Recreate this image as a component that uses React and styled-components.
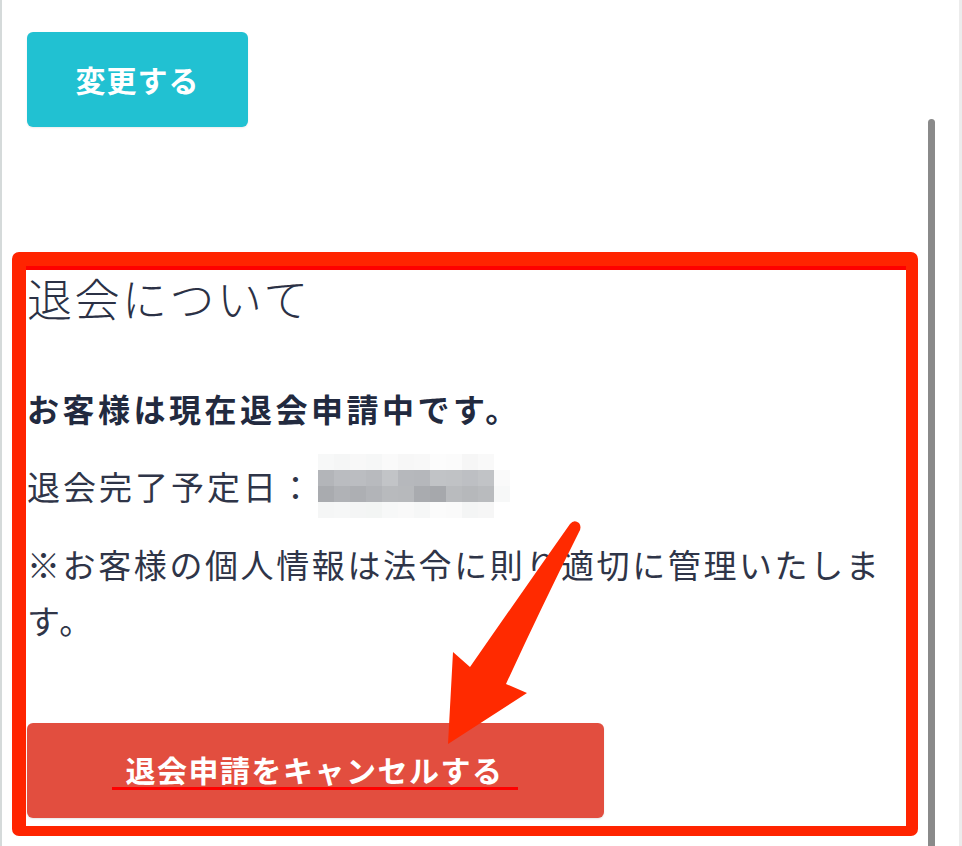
import React from "react";
import styled, { createGlobalStyle } from "styled-components";

const Global = createGlobalStyle`
  html, body { margin: 0; padding: 0; background: #ffffff; }
  body { font-family: "Noto Sans CJK JP", "Noto Sans", sans-serif; }
  * { box-sizing: border-box; }
`;

const Page = styled.div`
  position: relative;
  width: 962px;
  height: 846px;
  overflow: hidden;
  background: #ffffff;
  border-left: 2px solid #d5dada;
  border-right: 3px solid #ececec;
  padding: 32px 0 0 0;
`;

const ChangeButton = styled.button`
  display: flex;
  align-items: center;
  justify-content: center;
  margin-left: 25px;
  width: 221px;
  height: 95px;
  border: none;
  border-radius: 6px;
  background: #21c1d2;
  color: #ffffff;
  font-family: "Noto Sans CJK JP", sans-serif;
  font-weight: 700;
  font-size: 30px;
  letter-spacing: 1px;
  padding: 0 0 2px 0;
  box-shadow: 0 1px 2px rgba(0, 0, 0, 0.08);
`;

const Highlight = styled.section`
  margin: 125px 0 0 10px;
  width: 906px;
  height: 584px;
  border-style: solid;
  border-color: #ff2400;
  border-width: 14px 12px 10px 14px;
  border-radius: 7px;
  box-shadow: inset 0 4px 0 #ff0000;
  display: flex;
  flex-direction: column;
  padding-left: 1px;
  color: #2b3145;
`;

const Heading = styled.h2`
  margin: 0;
  font-family: "Noto Sans CJK JP", sans-serif;
  font-weight: 300;
  font-size: 45px;
  line-height: 64px;
  letter-spacing: 2.5px;
  color: #2b3145;
`;

const StatusText = styled.p`
  margin: 53px 0 0 0;
  font-weight: 700;
  font-size: 32px;
  line-height: 50px;
  letter-spacing: 3.5px;
  color: #222a3f;
`;

const InfoText = styled.p`
  margin: 28px 0 0 0;
  height: 50px;
  font-weight: 400;
  font-size: 33px;
  line-height: 50px;
  letter-spacing: 3px;
  color: #2f3548;
  display: flex;
  align-items: center;
`;

const Paragraph = styled.p`
  margin: 25px 0 0 0;
  font-weight: 400;
  font-size: 33px;
  line-height: 56px;
  letter-spacing: 2.6px;
  color: #2f3548;
`;

const Blur = styled.span`
  display: grid;
  grid-template-columns: repeat(12, 16px);
  grid-auto-rows: 16px;
  margin-left: 3px;
  flex: none;
`;

const Cell = styled.span`
  display: block;
  background: ${(p) => p.$c};
`;

const CancelButton = styled.button`
  margin-top: 75px;
  width: 577px;
  height: 95px;
  border: none;
  border-radius: 6px;
  background: #e24e3f;
  display: flex;
  align-items: center;
  justify-content: center;
  padding: 0 2px 0 0;
  box-shadow: 0 1px 2px rgba(0, 0, 0, 0.1);
`;

const CancelLabel = styled.span`
  display: inline-block;
  padding: 0 14px;
  font-family: "Noto Sans CJK JP", sans-serif;
  font-weight: 700;
  font-size: 30px;
  line-height: 36px;
  letter-spacing: 1.5px;
  color: #ffffff;
  border-bottom: 3px solid #ff0000;
`;

const Scrollbar = styled.div`
  position: absolute;
  left: 926px;
  top: 119px;
  width: 7px;
  height: 760px;
  border-radius: 4px 4px 0 0;
  background: #8a8a8a;
`;

const Overlay = styled.svg`
  position: absolute;
  left: -2px;
  top: 0;
  width: 962px;
  height: 846px;
  pointer-events: none;
`;

const rows = [
  ["#f7f8f8", "#f5f6f6", "#f8f8f8", "#f6f7f7", "#fafafa", "#f7f7f7", "#f8f8f8", "#fcfcfc", "#fbfbfb", "#f6f6f6", "#f9f9f9", "#ffffff"],
  ["#b3b5b9", "#babcc0", "#bbbdc1", "#b8babe", "#c2c4c7", "#b6b8bc", "#b5b7bb", "#c1c3c6", "#c0c2c5", "#bdbfc3", "#c1c3c6", "#fafafa"],
  ["#a9abaf", "#b0b2b6", "#adafb3", "#b2b4b8", "#b8babd", "#b7b9bc", "#a9abaf", "#a6a8ac", "#b9bbbe", "#b6b8bb", "#b9bbbe", "#f7f8f8"],
  ["#f5f6f6", "#f6f7f7", "#f4f5f5", "#f3f5f4", "#f7f8f8", "#f9f9f9", "#f6f7f7", "#fbfbfb", "#fafafa", "#f4f5f5", "#f6f6f6", "#ffffff"],
];

export default function App() {
  return (
    <>
      <Global />
      <Page>
        <ChangeButton>変更する</ChangeButton>
        <Highlight>
          <Heading>退会について</Heading>
          <StatusText>お客様は現在退会申請中です。</StatusText>
          <InfoText>
            退会完了予定日：
            <Blur aria-hidden="true">
              {rows.flatMap((r, i) => r.map((c, j) => <Cell key={`${i}-${j}`} $c={c} />))}
            </Blur>
          </InfoText>
          <Paragraph>※お客様の個人情報は法令に則り適切に管理いたします。</Paragraph>
          <CancelButton>
            <CancelLabel>退会申請をキャンセルする</CancelLabel>
          </CancelButton>
        </Highlight>
        <Scrollbar />
        <Overlay viewBox="0 0 962 846">
          <path
            d="M 570 524 Q 574 519 579 523 Q 582 527 579 532 Q 540 610 506 684 L 527 693 L 448 744 L 453 652 L 470 667 Q 520 595 570 524 Z"
            fill="#ff2a00"
          />
        </Overlay>
      </Page>
    </>
  );
}
